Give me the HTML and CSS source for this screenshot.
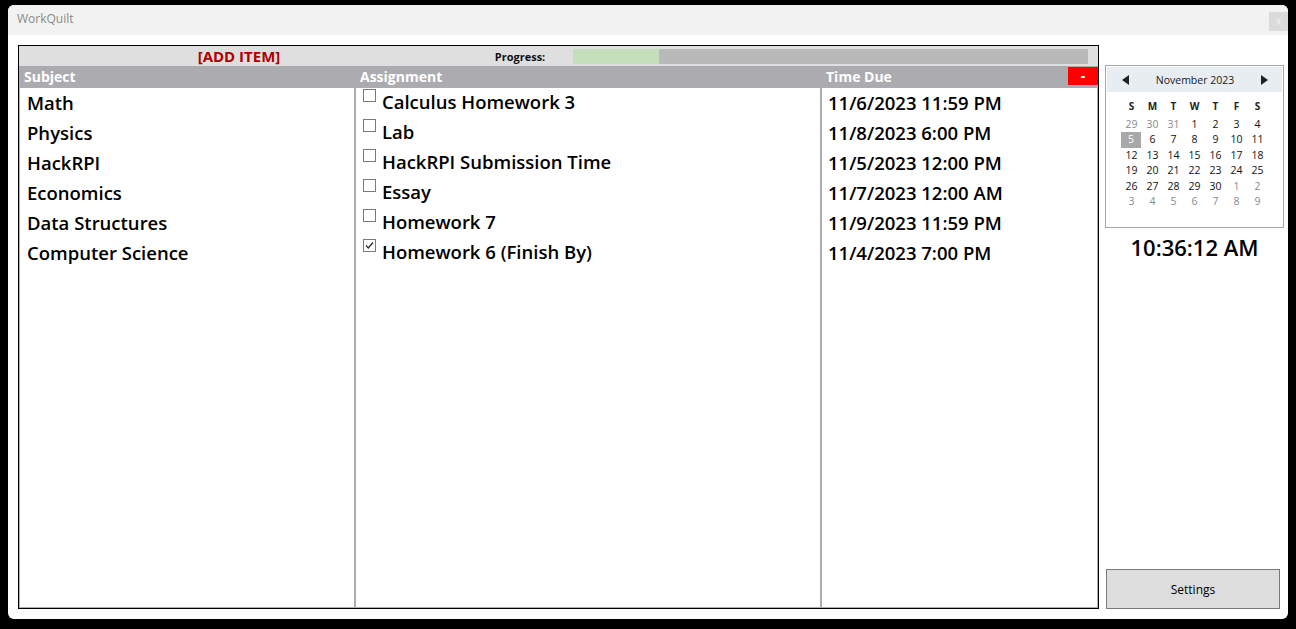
FILE: index.html
```html
<!DOCTYPE html>
<html>
<head>
<meta charset="utf-8">
<title>WorkQuilt</title>
<link rel="stylesheet" href="styles.css">
</head>
<body>
<div class="window">
  <div class="titlebar">
    <span class="title">WorkQuilt</span>
    <span class="close">x</span>
  </div>
  <div class="content">
    <div class="table">
      <div class="topbar">
        <div class="add">[ADD ITEM]</div>
        <div class="plabel">Progress:</div>
        <div class="pbar"><div class="pfill" style="width:16.7%"></div></div>
      </div>
      <div class="header">
        <div class="hcell">Subject</div>
        <div class="hcell">Assignment</div>
        <div class="hcell htime">Time Due<span class="minus">-</span></div>
      </div>
      <div class="lists">
        <div class="list subjects">
          <div class="row">Math</div>
          <div class="row">Physics</div>
          <div class="row">HackRPI</div>
          <div class="row">Economics</div>
          <div class="row">Data Structures</div>
          <div class="row">Computer Science</div>
        </div>
        <div class="list assignments">
          <div class="row"><span class="cb"></span>Calculus Homework 3</div>
          <div class="row"><span class="cb"></span>Lab</div>
          <div class="row"><span class="cb"></span>HackRPI Submission Time</div>
          <div class="row"><span class="cb"></span>Essay</div>
          <div class="row"><span class="cb"></span>Homework 7</div>
          <div class="row"><span class="cb"><svg width="11" height="11" viewBox="0 0 11 11"><path d="M2 5.5 L4.3 8 L9 2.5" fill="none" stroke="#333" stroke-width="1.4"/></svg></span>Homework 6 (Finish By)</div>
        </div>
        <div class="list times">
          <div class="row">11/6/2023 11:59 PM</div>
          <div class="row">11/8/2023 6:00 PM</div>
          <div class="row">11/5/2023 12:00 PM</div>
          <div class="row">11/7/2023 12:00 AM</div>
          <div class="row">11/9/2023 11:59 PM</div>
          <div class="row">11/4/2023 7:00 PM</div>
        </div>
      </div>
    </div>
    <div class="side">
      <div class="calendar">
        <div class="calhead">
          <svg width="7" height="10" viewBox="0 0 7 10"><path d="M7 0 L0 5 L7 10 Z" fill="#222"/></svg>
          <span class="month">November 2023</span>
          <svg width="7" height="10" viewBox="0 0 7 10"><path d="M0 0 L7 5 L0 10 Z" fill="#222"/></svg>
        </div>
        <div class="dow">
          <span>S</span><span>M</span><span>T</span><span>W</span><span>T</span><span>F</span><span>S</span>
        </div>
        <div class="dates">
          <span class="other">29</span><span class="other">30</span><span class="other">31</span><span>1</span><span>2</span><span>3</span><span>4</span>
          <span class="sel">5</span><span>6</span><span>7</span><span>8</span><span>9</span><span>10</span><span>11</span>
          <span>12</span><span>13</span><span>14</span><span>15</span><span>16</span><span>17</span><span>18</span>
          <span>19</span><span>20</span><span>21</span><span>22</span><span>23</span><span>24</span><span>25</span>
          <span>26</span><span>27</span><span>28</span><span>29</span><span>30</span><span class="other">1</span><span class="other">2</span>
          <span class="other">3</span><span class="other">4</span><span class="other">5</span><span class="other">6</span><span class="other">7</span><span class="other">8</span><span class="other">9</span>
        </div>
      </div>
      <div class="clock">10:36:12 AM</div>
      <button class="settings">Settings</button>
    </div>
  </div>
</div>
</body>
</html>
```
FILE: styles.css
```css
html, body {
  margin: 0;
  padding: 0;
  background: #000;
  height: 629px;
  overflow: hidden;
  font-family: "Open Sans", "Noto Sans", sans-serif;
}
.window {
  margin: 5px 0 0 8px;
  width: 1280px;
  height: 614px;
  background: #fff;
  border-radius: 6px;
  overflow: hidden;
  display: flex;
  flex-direction: column;
}
.titlebar {
  height: 30px;
  background: #f2f2f2;
  display: flex;
  justify-content: space-between;
  align-items: flex-start;
  flex: none;
}
.title {
  padding-left: 9px;
  line-height: 28px;
  font-size: 12px;
  color: #8a8a8a;
}
.close {
  margin-top: 7px;
  width: 19px;
  height: 19px;
  background: #dadada;
  color: #f2f2f2;
  font-size: 10px;
  line-height: 18px;
  text-align: center;
}
.content {
  flex: 1;
  display: flex;
  padding: 10px 0 10px 10px;
  gap: 6px;
  min-height: 0;
}
.table {
  width: 1081px;
  box-sizing: border-box;
  border: 1px solid #000;
  display: flex;
  flex-direction: column;
}
.topbar {
  height: 20px;
  background: #dfdfdf;
  display: flex;
  align-items: center;
  flex: none;
}
.add {
  width: 440px;
  text-align: center;
  color: #b00000;
  font-weight: 700;
  font-size: 15px;
  line-height: 20px;
}
.plabel {
  width: 114px;
  text-align: center;
  font-weight: 700;
  font-size: 11px;
  color: #111;
  padding-left: 8px;
  box-sizing: border-box;
}
.pbar {
  flex: 1;
  height: 15px;
  margin-right: 10px;
  background: #b9b9b9;
}
.pfill {
  height: 100%;
  background: #c3dfbb;
}
.header {
  height: 21px;
  background: #acacb0;
  display: grid;
  grid-template-columns: 336px 466px 1fr;
  flex: none;
}
.hcell {
  color: #fff;
  font-weight: 700;
  font-size: 14px;
  line-height: 21px;
  padding-left: 5px;
}
.htime {
  display: flex;
  justify-content: space-between;
  align-items: center;
}
.minus {
  width: 30px;
  height: 18px;
  margin-top: -2px;
  background: #ff0000;
  color: #fff;
  font-weight: 700;
  font-size: 14px;
  line-height: 17px;
  text-align: center;
}
.lists {
  flex: 1;
  display: grid;
  grid-template-columns: 336px 466px 1fr;
}
.list {
  border: 1px solid #acacb0;
  background: #fff;
}
.row {
  height: 30px;
  box-sizing: border-box;
  padding-bottom: 2px;
  display: flex;
  align-items: center;
  font-size: 18.5px;
  font-weight: 600;
  color: #000;
  white-space: nowrap;
}
.subjects .row { padding-left: 7px; }
.times .row { padding-left: 6px; }
.assignments .row {
  padding-left: 7px;
  padding-bottom: 0;
  align-items: flex-start;
  line-height: 27px;
}
.cb {
  width: 13px;
  height: 13px;
  box-sizing: border-box;
  border: 1px solid #7a7a7a;
  background: #fff;
  margin-top: 1px;
  margin-right: 6px;
  display: flex;
  align-items: center;
  justify-content: center;
}
.side {
  width: 179px;
  display: flex;
  flex-direction: column;
  padding-top: 20px;
}
.calendar {
  box-sizing: border-box;
  height: 163px;
  border: 1px solid #a3a8ae;
  padding: 1px;
}
.calhead {
  height: 25px;
  background: #e8edf2;
  display: flex;
  align-items: center;
  justify-content: space-between;
  padding: 0 14px 0 15px;
}
.month {
  font-size: 10.5px;
  color: #1a1a1a;
}
.dow, .dates {
  display: grid;
  grid-template-columns: repeat(7, 21px);
  justify-content: center;
}
.dow {
  margin-top: 6px;
  height: 16px;
  align-items: center;
}
.dow span {
  text-align: center;
  font-size: 10px;
  font-weight: 700;
  color: #222;
}
.dates {
  margin-top: 3px;
  grid-auto-rows: 15.4px;
}
.dates span {
  text-align: center;
  font-size: 10.5px;
  line-height: 15.4px;
  color: #111;
}
.dates .other { color: #8a8a8a; }
.dates .sel {
  background: #a8a8a8;
  color: #fff;
  height: 16px;
  margin-right: 1px;
}
.clock {
  margin-top: 4px;
  text-align: center;
  font-size: 22px;
  line-height: 30px;
  font-weight: 600;
  color: #000;
}
.settings {
  margin-top: auto;
  margin-left: 1px;
  width: 174px;
  height: 40px;
  background: #dddddd;
  border: 1px solid #7a7a7a;
  font-family: "Open Sans", "Noto Sans", sans-serif;
  font-size: 12px;
  color: #000;
  padding: 0;
}
```
